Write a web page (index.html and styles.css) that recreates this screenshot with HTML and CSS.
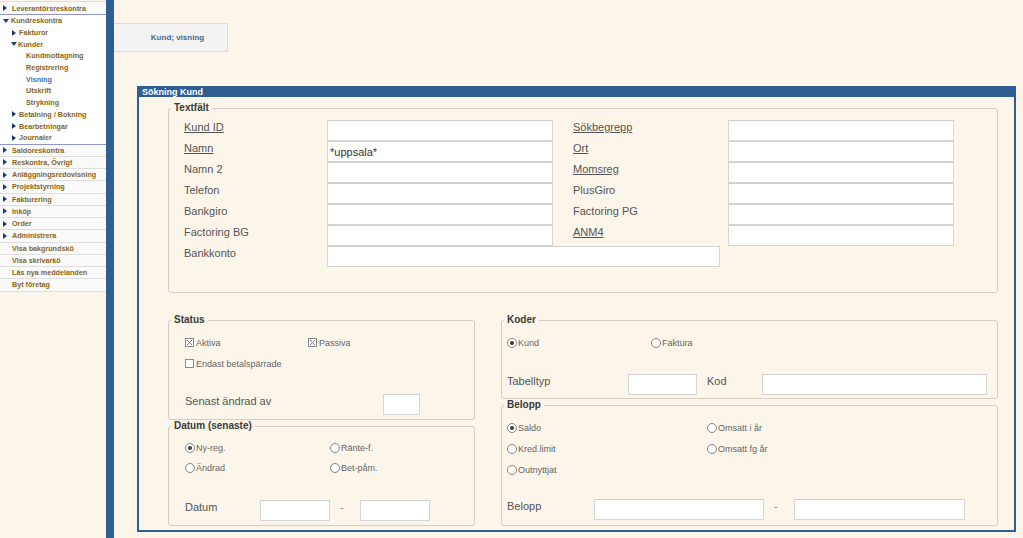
FILE: index.html
```html
<!DOCTYPE html>
<html lang="sv">
<head>
<meta charset="utf-8">
<title>Kund; visning</title>
<link rel="stylesheet" href="styles.css">
</head>
<body>
<nav class="sidebar">
  <div class="item first"><span class="tri-r"></span>Leverantörsreskontra</div>
  <div class="group">
    <div class="sub"><span class="tri-d"></span>Kundreskontra</div>
    <div class="sub lvl2"><span class="tri-r small"></span>Fakturor</div>
    <div class="sub lvl2b"><span class="tri-d small"></span>Kunder</div>
    <div class="sub lvl3">Kundmottagning</div>
    <div class="sub lvl3">Registrering</div>
    <div class="sub lvl3 active">Visning</div>
    <div class="sub lvl3">Utskrift</div>
    <div class="sub lvl3">Strykning</div>
    <div class="sub lvl2"><span class="tri-r small"></span>Betalning / Bokning</div>
    <div class="sub lvl2"><span class="tri-r small"></span>Bearbetningar</div>
    <div class="sub lvl2"><span class="tri-r small"></span>Journaler</div>
  </div>
  <div class="item"><span class="tri-r"></span>Saldoreskontra</div>
  <div class="item"><span class="tri-r"></span>Reskontra, Övrigt</div>
  <div class="item"><span class="tri-r"></span>Anläggningsredovisning</div>
  <div class="item"><span class="tri-r"></span>Projektstyrning</div>
  <div class="item"><span class="tri-r"></span>Fakturering</div>
  <div class="item"><span class="tri-r"></span>Inköp</div>
  <div class="item"><span class="tri-r"></span>Order</div>
  <div class="item"><span class="tri-r"></span>Administrera</div>
  <div class="item plain">Visa bakgrundskö</div>
  <div class="item plain">Visa skrivarkö</div>
  <div class="item plain">Läs nya meddelanden</div>
  <div class="item plain">Byt företag</div>
</nav>

<main class="main">
  <div class="tab">Kund; visning</div>

  <section class="panel">
    <div class="panel-head">Sökning Kund</div>
    <div class="panel-body">

      <fieldset class="box">
        <legend>Textfält</legend>
        <div class="tf-grid">
          <span class="lbl u">Kund ID</span><input class="field w226" type="text">
          <span class="lbl u">Sökbegrepp</span><input class="field w226" type="text">

          <span class="lbl u">Namn</span><input class="field w226" type="text" value="*uppsala*">
          <span class="lbl u">Ort</span><input class="field w226" type="text">

          <span class="lbl">Namn 2</span><input class="field w226" type="text">
          <span class="lbl u">Momsreg</span><input class="field w226" type="text">

          <span class="lbl">Telefon</span><input class="field w226" type="text">
          <span class="lbl">PlusGiro</span><input class="field w226" type="text">

          <span class="lbl">Bankgiro</span><input class="field w226" type="text">
          <span class="lbl">Factoring PG</span><input class="field w226" type="text">

          <span class="lbl">Factoring BG</span><input class="field w226" type="text">
          <span class="lbl u">ANM4</span><input class="field w226" type="text">

          <span class="lbl">Bankkonto</span><input class="field wide" type="text">
        </div>
      </fieldset>

      <div class="lower">
        <div class="col">
          <fieldset class="box">
            <legend>Status</legend>
            <div class="inner left">
              <div class="row h21">
                <label class="opt w123"><span class="cb"><svg width="7" height="7" viewBox="0 0 7 7"><path d="M1 1L6 6M6 1L1 6" stroke="#7a7a7a" stroke-width="1"/></svg></span>Aktiva</label>
                <label class="opt"><span class="cb"><svg width="7" height="7" viewBox="0 0 7 7"><path d="M1 1L6 6M6 1L1 6" stroke="#7a7a7a" stroke-width="1"/></svg></span>Passiva</label>
              </div>
              <div class="row h21">
                <label class="opt"><span class="cb"></span>Endast betalspärrade</label>
              </div>
              <div class="row h21 mt20">
                <span class="lbl w198">Senast ändrad av</span><input class="field w37" type="text">
              </div>
            </div>
          </fieldset>

          <fieldset class="box">
            <legend>Datum (senaste)</legend>
            <div class="inner left">
              <div class="row h20">
                <label class="opt w145"><span class="rb on"></span>Ny-reg.</label>
                <label class="opt"><span class="rb"></span>Ränte-f.</label>
              </div>
              <div class="row h20">
                <label class="opt w145"><span class="rb"></span>Ändrad</label>
                <label class="opt"><span class="rb"></span>Bet-påm.</label>
              </div>
              <div class="row h21 mt22">
                <span class="lbl w75">Datum</span><input class="field w70" type="text"><span class="dash w30">-</span><input class="field w70" type="text">
              </div>
            </div>
          </fieldset>
        </div>

        <div class="col">
          <fieldset class="box">
            <legend>Koder</legend>
            <div class="inner right koder">
              <div class="row h21">
                <label class="opt w144"><span class="rb on"></span>Kund</label>
                <label class="opt"><span class="rb"></span>Faktura</label>
              </div>
              <div class="row h21 mt21">
                <span class="lbl w122">Tabelltyp</span><input class="field w69" type="text"><span class="lbl lbl-kod">Kod</span><input class="field w225" type="text">
              </div>
            </div>
          </fieldset>

          <fieldset class="box">
            <legend>Belopp</legend>
            <div class="inner right belopp">
              <div class="row h21">
                <label class="opt w200"><span class="rb on"></span>Saldo</label>
                <label class="opt"><span class="rb"></span>Omsatt i år</label>
              </div>
              <div class="row h21">
                <label class="opt w200"><span class="rb"></span>Kred.limit</label>
                <label class="opt"><span class="rb"></span>Omsatt fg år</label>
              </div>
              <div class="row h21">
                <label class="opt"><span class="rb"></span>Outnyttjat</label>
              </div>
              <div class="row h21 mt19">
                <span class="lbl w88">Belopp</span><input class="field w170" type="text"><span class="dash w30">-</span><input class="field w171" type="text">
              </div>
            </div>
          </fieldset>
        </div>
      </div>

    </div>
  </section>
</main>
</body>
</html>
```

FILE: styles.css
```css
* { box-sizing: border-box; }

html, body {
  margin: 0;
  height: 538px;
  overflow: hidden;
}

body {
  display: flex;
  background: #fcf5e9;
  font-family: "Liberation Sans", Arial, sans-serif;
  color: #555;
}

/* ---------- sidebar ---------- */
.sidebar {
  flex: none;
  width: 114px;
  height: 538px;
  padding-top: 1px;
  border-right: 8px solid #2e5e92;
  background: #fcf5e9;
}

.item,
.sub {
  display: flex;
  align-items: center;
  white-space: nowrap;
  font-size: 7.2px;
  font-weight: bold;
  color: #85651a;
  background: #fafafa;
  padding-left: 3px;
}

.item {
  height: 12.25px;
  border-bottom: 1px solid #dedede;
}

.item.first {
  height: 13px;
  border-top: 1px solid #dedede;
  border-bottom: none;
}

.item.plain { padding-left: 12px; }

.group {
  border-top: 1px solid #8f95cc;
  border-bottom: 1px solid #8f95cc;
  background: #fff;
}

.sub {
  height: 11.7px;
  background: #fff;
}

.sub.lvl2 { padding-left: 12px; }
.sub.lvl2b { padding-left: 11px; }
.sub.lvl3 { padding-left: 26px; }
.sub.active { color: #3d6fa8; }

.tri-r {
  flex: none;
  width: 0;
  height: 0;
  border-top: 3.5px solid transparent;
  border-bottom: 3.5px solid transparent;
  border-left: 4px solid #1f3d6b;
  margin-right: 5px;
}
.tri-r.small { margin-right: 3px; }

.tri-d {
  flex: none;
  width: 0;
  height: 0;
  border-left: 3.5px solid transparent;
  border-right: 3.5px solid transparent;
  border-top: 4px solid #1f3d6b;
  margin-right: 2px;
}
.tri-d.small { margin-right: 1px; }

/* ---------- main ---------- */
.main {
  flex: 1;
  min-width: 0;
  display: flex;
  flex-direction: column;
}

.tab {
  margin-top: 23px;
  width: 114px;
  height: 29px;
  padding-left: 14px;
  display: flex;
  align-items: center;
  justify-content: center;
  background: #f3f3f3;
  border: 1px solid #dcdcdc;
  border-left: none;
  font-size: 8px;
  font-weight: bold;
  color: #4a6888;
}

.panel {
  margin: 34px 7px 0 23px;
  border: 2px solid #2e5e92;
  background: #fcf5e9;
}

.panel-head {
  height: 9px;
  padding-left: 3px;
  background: #2e5e92;
  color: #fff;
  font-size: 9px;
  line-height: 9px;
  font-weight: bold;
  white-space: nowrap;
}

.panel-body {
  padding: 5px 16px 4px 29px;
}

/* ---------- fieldsets ---------- */
.box {
  margin: 0;
  padding: 0;
  min-width: 0;
  border: 1px solid #d3cdc3;
  border-radius: 3px;
}

.box legend {
  margin-left: 2px;
  padding: 0 3px;
  font-size: 10px;
  line-height: 12px;
  font-weight: bold;
  color: #3a3a3a;
}

.tf-grid {
  display: grid;
  grid-template-columns: 143px 246px 155px 226px;
  grid-auto-rows: 21px;
  padding: 6px 0 25px 15px;
}

.lbl {
  font-size: 11px;
  line-height: 15px;
  color: #555;
  white-space: nowrap;
}

.lbl.u { text-decoration: underline; }

.field {
  display: block;
  height: 21px;
  margin: 0;
  padding: 0 2px;
  background: #fff;
  border: 1px solid #d6d6d6;
  border-top-color: #cfcfcf;
  font-family: "Liberation Sans", Arial, sans-serif;
  font-size: 11px;
  color: #333;
  outline: none;
}

.w226 { width: 226px; }
.wide { width: 393px; grid-column: 2 / 4; }
.w37 { width: 37px; flex: none; }
.w70 { width: 70px; flex: none; }
.w69 { width: 69px; flex: none; }
.w225 { width: 225px; flex: none; }
.w170 { width: 170px; flex: none; }
.w171 { width: 171px; flex: none; }

/* ---------- lower area ---------- */
.lower {
  display: grid;
  grid-template-columns: 307px 497px;
  column-gap: 26px;
  margin-top: 21px;
}

.col {
  display: flex;
  flex-direction: column;
}

.inner { padding: 6px 0 4px 16px; }
.inner.right { padding-left: 5px; }
.inner.koder { padding-bottom: 3px; }
.inner.belopp { padding-bottom: 5px; }

.row {
  display: flex;
  align-items: flex-start;
}

.h20 { height: 20px; align-items: center; }
.h21 { height: 21px; }
.row.h21 .opt { align-self: center; }

.mt19 { margin-top: 19px; }
.mt20 { margin-top: 20px; }
.mt21 { margin-top: 21px; }
.mt22 { margin-top: 22px; }

.opt {
  display: flex;
  align-items: center;
  font-size: 9px;
  color: #666;
  white-space: nowrap;
}

.w123 { width: 123px; }
.w144 { width: 144px; }
.w145 { width: 145px; }
.w200 { width: 200px; }
.w198 { width: 198px; flex: none; }
.w75 { width: 75px; flex: none; }
.w122 { width: 121px; flex: none; }
.w88 { width: 87px; flex: none; }

.lbl-kod {
  width: 65px;
  flex: none;
  padding-left: 10px;
}

.dash {
  flex: none;
  font-size: 11px;
  line-height: 15px;
  color: #888;
  padding-left: 10px;
}
.w30 { width: 30px; }

.cb {
  flex: none;
  width: 9px;
  height: 9px;
  margin-right: 2px;
  display: flex;
  align-items: center;
  justify-content: center;
  border: 1px solid #8a8a8a;
  background: #fff;
}

.rb {
  flex: none;
  width: 10px;
  height: 10px;
  margin-right: 1px;
  display: flex;
  align-items: center;
  justify-content: center;
  border: 1px solid #858585;
  border-radius: 50%;
  background: #fff;
}

.rb.on::after {
  content: "";
  width: 4px;
  height: 4px;
  border-radius: 50%;
  background: #3a3a3a;
}
```
